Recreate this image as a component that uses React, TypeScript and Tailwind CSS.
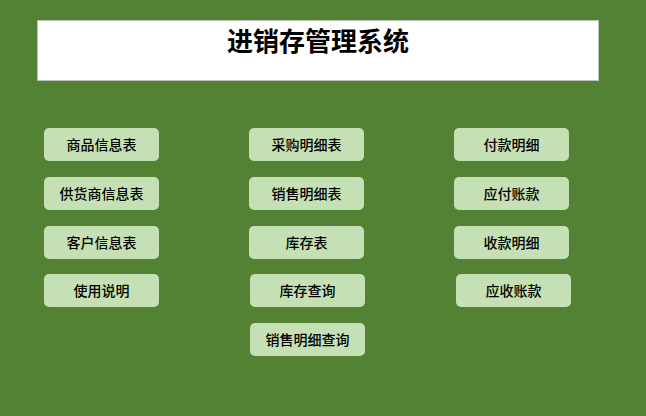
const columns: { label: string; shift?: string }[][] = [
  [{ label: '商品信息表' }, { label: '供货商信息表' }, { label: '客户信息表' }, { label: '使用说明' }],
  [
    { label: '采购明细表' },
    { label: '销售明细表' },
    { label: '库存表' },
    { label: '库存查询', shift: 'ml-[1px]' },
    { label: '销售明细查询', shift: 'ml-[1px]' },
  ],
  [{ label: '付款明细' }, { label: '应付账款' }, { label: '收款明细' }, { label: '应收账款', shift: 'ml-[2px]' }],
]

function MenuButton({ label, shift }: { label: string; shift?: string }) {
  return (
    <button
      className={[
        'flex h-[33px] w-[115px] items-center justify-center rounded-[5px] bg-[#c5e0b4] text-[14px] font-medium text-black',
        shift ?? '',
      ].join(' ')}
    >
      {label}
    </button>
  )
}

export default function App() {
  return (
    <div
      className="h-[416px] w-[646px] bg-[#548235] pt-[20px]"
      style={{ fontFamily: '"Noto Sans CJK SC", "Noto Sans", sans-serif' }}
    >
      {/* title bar */}
      <div className="ml-[37px] h-[61px] w-[562px] border border-[#c0c4bc] bg-white pt-[4px] text-center">
        <h1 className="text-[26px] font-bold leading-[30px] text-black">进销存管理系统</h1>
      </div>

      {/* menu buttons */}
      <div className="grid grid-cols-[115px_115px_115px] gap-x-[90px] pl-[44px] pt-[47px]">
        {columns.map((col, i) => (
          <div key={i} className="flex flex-col gap-[15.75px]">
            {col.map((b) => (
              <MenuButton key={b.label} label={b.label} shift={b.shift} />
            ))}
          </div>
        ))}
      </div>
    </div>
  )
}
